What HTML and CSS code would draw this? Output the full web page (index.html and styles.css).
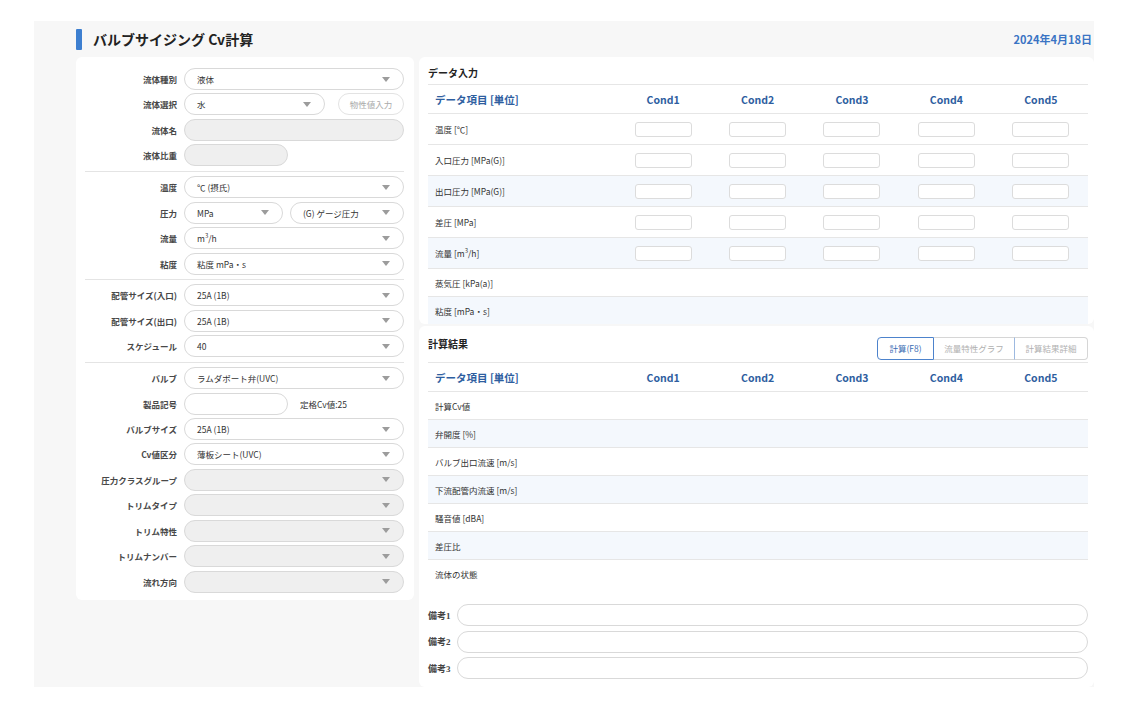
FILE: index.html
```html
<!DOCTYPE html>
<html lang="ja">
<head>
<meta charset="utf-8">
<title>バルブサイジング Cv計算</title>
<link rel="stylesheet" href="styles.css">
</head>
<body>
<div class="page">
  <header class="top">
    <div class="title-wrap"><span class="title-bar"></span><h1 class="title">バルブサイジング Cv計算</h1></div>
    <div class="date">2024年4月18日</div>
  </header>
  <main class="main">
    <section class="card form-card">
      <div class="form">
        <div class="row"><span class="lbl">流体種別</span><div class="ctrl"><div class="sel grow"><span>液体</span><i class="caret"></i></div></div></div>
        <div class="row"><span class="lbl">流体選択</span><div class="ctrl gap13"><div class="sel w141"><span>水</span><i class="caret"></i></div><div class="pill-btn">物性値入力</div></div></div>
        <div class="row"><span class="lbl">流体名</span><div class="ctrl"><div class="sel grow disabled"></div></div></div>
        <div class="row"><span class="lbl">液体比重</span><div class="ctrl"><div class="sel w104 disabled"></div></div></div>
        <div class="sep"></div>
        <div class="row"><span class="lbl">温度</span><div class="ctrl"><div class="sel grow"><span>℃ (摂氏)</span><i class="caret"></i></div></div></div>
        <div class="row"><span class="lbl">圧力</span><div class="ctrl"><div class="sel w99"><span>MPa</span><i class="caret"></i></div><div class="sel grow"><span>(G) ゲージ圧力</span><i class="caret"></i></div></div></div>
        <div class="row"><span class="lbl">流量</span><div class="ctrl"><div class="sel grow"><span>m<sup>3</sup>/h</span><i class="caret"></i></div></div></div>
        <div class="row"><span class="lbl">粘度</span><div class="ctrl"><div class="sel grow"><span>粘度 mPa・s</span><i class="caret"></i></div></div></div>
        <div class="sep"></div>
        <div class="row"><span class="lbl">配管サイズ(入口)</span><div class="ctrl"><div class="sel grow"><span>25A (1B)</span><i class="caret"></i></div></div></div>
        <div class="row"><span class="lbl">配管サイズ(出口)</span><div class="ctrl"><div class="sel grow"><span>25A (1B)</span><i class="caret"></i></div></div></div>
        <div class="row"><span class="lbl">スケジュール</span><div class="ctrl"><div class="sel grow"><span>40</span><i class="caret"></i></div></div></div>
        <div class="sep"></div>
        <div class="row"><span class="lbl">バルブ</span><div class="ctrl"><div class="sel grow"><span>ラムダポート弁(UVC)</span><i class="caret"></i></div></div></div>
        <div class="row"><span class="lbl">製品記号</span><div class="ctrl gap12"><div class="sel w104"></div><span class="note">定格Cv値:25</span></div></div>
        <div class="row"><span class="lbl">バルブサイズ</span><div class="ctrl"><div class="sel grow"><span>25A (1B)</span><i class="caret"></i></div></div></div>
        <div class="row"><span class="lbl">Cv値区分</span><div class="ctrl"><div class="sel grow"><span>薄板シート(UVC)</span><i class="caret"></i></div></div></div>
        <div class="row"><span class="lbl">圧力クラスグループ</span><div class="ctrl"><div class="sel grow disabled"><span></span><i class="caret"></i></div></div></div>
        <div class="row"><span class="lbl">トリムタイプ</span><div class="ctrl"><div class="sel grow disabled"><span></span><i class="caret"></i></div></div></div>
        <div class="row"><span class="lbl">トリム特性</span><div class="ctrl"><div class="sel grow disabled"><span></span><i class="caret"></i></div></div></div>
        <div class="row"><span class="lbl">トリムナンバー</span><div class="ctrl"><div class="sel grow disabled"><span></span><i class="caret"></i></div></div></div>
        <div class="row"><span class="lbl">流れ方向</span><div class="ctrl"><div class="sel grow disabled"><span></span><i class="caret"></i></div></div></div>
      </div>
    </section>

    <div class="right">
      <section class="card data-card">
        <h2 class="sec-title">データ入力</h2>
        <div class="table">
          <div class="trow thead"><span class="tc-item">データ項目 [単位]</span><span>Cond1</span><span>Cond2</span><span>Cond3</span><span>Cond4</span><span>Cond5</span></div>
          <div class="trow tin"><span class="tc-item">温度 [℃]</span><span><i class="cin"></i></span><span><i class="cin"></i></span><span><i class="cin"></i></span><span><i class="cin"></i></span><span><i class="cin"></i></span></div>
          <div class="trow tin"><span class="tc-item">入口圧力 [MPa(G)]</span><span><i class="cin"></i></span><span><i class="cin"></i></span><span><i class="cin"></i></span><span><i class="cin"></i></span><span><i class="cin"></i></span></div>
          <div class="trow tin alt"><span class="tc-item">出口圧力 [MPa(G)]</span><span><i class="cin"></i></span><span><i class="cin"></i></span><span><i class="cin"></i></span><span><i class="cin"></i></span><span><i class="cin"></i></span></div>
          <div class="trow tin"><span class="tc-item">差圧 [MPa]</span><span><i class="cin"></i></span><span><i class="cin"></i></span><span><i class="cin"></i></span><span><i class="cin"></i></span><span><i class="cin"></i></span></div>
          <div class="trow tin alt"><span class="tc-item">流量 [m<sup>3</sup>/h]</span><span><i class="cin"></i></span><span><i class="cin"></i></span><span><i class="cin"></i></span><span><i class="cin"></i></span><span><i class="cin"></i></span></div>
          <div class="trow tplain"><span class="tc-item">蒸気圧 [kPa(a)]</span></div>
          <div class="trow tplain alt last"><span class="tc-item">粘度 [mPa・s]</span></div>
        </div>
      </section>

      <section class="card result-card">
        <div class="res-head">
          <h2 class="sec-title">計算結果</h2>
          <div class="btn-group">
            <span class="gbtn active">計算(F8)</span>
            <span class="gbtn">流量特性グラフ</span>
            <span class="gbtn">計算結果詳細</span>
          </div>
        </div>
        <div class="table">
          <div class="trow thead"><span class="tc-item">データ項目 [単位]</span><span>Cond1</span><span>Cond2</span><span>Cond3</span><span>Cond4</span><span>Cond5</span></div>
          <div class="trow tres"><span class="tc-item">計算Cv値</span></div>
          <div class="trow tres alt"><span class="tc-item">弁開度 [%]</span></div>
          <div class="trow tres"><span class="tc-item">バルブ出口流速 [m/s]</span></div>
          <div class="trow tres alt"><span class="tc-item">下流配管内流速 [m/s]</span></div>
          <div class="trow tres"><span class="tc-item">騒音値 [dBA]</span></div>
          <div class="trow tres alt"><span class="tc-item">差圧比</span></div>
          <div class="trow tres last"><span class="tc-item">流体の状態</span></div>
        </div>
        <div class="remarks">
          <div class="rrow"><span class="rlbl">備考1</span><div class="rin"></div></div>
          <div class="rrow"><span class="rlbl">備考2</span><div class="rin"></div></div>
          <div class="rrow"><span class="rlbl">備考3</span><div class="rin"></div></div>
        </div>
      </section>
    </div>
  </main>
</div>
</body>
</html>
```

FILE: styles.css
```css
* { box-sizing: border-box; }
html, body { margin: 0; padding: 0; background: #fff; }
body {
  font-family: "Noto Sans CJK JP", "Noto Sans", sans-serif;
  color: #333;
  padding: 21px 37px 0 34px;
}
.page {
  width: 1060px;
  height: 666px;
  background: #f7f7f7;
  display: flex;
  flex-direction: column;
}
.top {
  height: 36px;
  display: flex;
  align-items: center;
  justify-content: space-between;
  padding: 0 2px 0 42px;
}
.title-wrap { display: flex; align-items: center; }
.title-bar {
  width: 6px;
  height: 21px;
  background: #3d7fd0;
  border-radius: 1px;
  margin-right: 11px;
}
.title {
  margin: 0;
  font-size: 14px;
  font-weight: 700;
  color: #222;
  line-height: 20px;
}
.date {
  font-size: 11px;
  font-weight: 700;
  color: #3a74c4;
}
.main {
  flex: 1;
  display: flex;
  gap: 5px;
  padding-left: 42px;
  min-height: 0;
}
.card {
  background: #fff;
  border-radius: 6px;
}
.form-card {
  width: 338px;
  align-self: flex-start;
  padding: 11px 10px 7px 9px;
}
.form { display: flex; flex-direction: column; gap: 3.45px; }
.row {
  display: grid;
  grid-template-columns: 92px 1fr;
  column-gap: 7px;
  align-items: center;
  height: 22px;
}
.lbl {
  text-align: right;
  font-size: 8.5px;
  font-weight: 700;
  color: #484848;
  white-space: nowrap;
}
.ctrl { display: flex; align-items: center; gap: 7px; }
.ctrl.gap13 { gap: 13px; }
.ctrl.gap12 { gap: 12px; }
.sel {
  height: 22px;
  border: 1px solid #d9d9d9;
  border-radius: 11px;
  background: #fff;
  display: flex;
  align-items: center;
  justify-content: space-between;
  padding: 0 13px 0 12px;
  font-size: 8.5px;
  color: #333;
  white-space: nowrap;
}
.sel sup { font-size: 6px; line-height: 0; }
.sel.grow { flex: 1; }
.sel.w141 { width: 141px; }
.sel.w104 { width: 104px; }
.sel.w99 { width: 99px; }
.sel.disabled { background: #efefef; }
.caret {
  width: 0;
  height: 0;
  border-left: 4px solid transparent;
  border-right: 4px solid transparent;
  border-top: 5px solid #9c9c9c;
}
.pill-btn {
  width: 66px;
  height: 22px;
  border: 1px solid #e3e3e3;
  border-radius: 11px;
  display: flex;
  align-items: center;
  justify-content: center;
  font-size: 8.5px;
  color: #aaa;
}
.note { font-size: 8.5px; color: #333; }
.sep {
  height: 1px;
  background: #e4e4e4;
  margin: 1px 0;
}

.right {
  flex: 1;
  display: flex;
  flex-direction: column;
  gap: 2px;
}
.data-card { padding: 9px 6px 0 9px; }
.sec-title {
  margin: 0;
  font-size: 10px;
  font-weight: 700;
  color: #222;
  line-height: 14px;
}
.data-card .sec-title { margin-bottom: 4px; }
.table { border-top: 1px solid #e6e6e6; }
.trow {
  display: grid;
  grid-template-columns: 188px repeat(5, 1fr);
  align-items: center;
  border-bottom: 1px solid #e6e6e6;
  font-size: 8.5px;
  color: #333;
}
.trow > span { text-align: center; display: flex; justify-content: center; align-items: center; }
.trow > .tc-item { justify-content: flex-start; padding-left: 7px; text-align: left; }
.trow sup { font-size: 6px; line-height: 0; margin-top: -4px; }
.thead { height: 29px; font-size: 10.5px; font-weight: 700; color: #2e5e9f; }
.tin { height: 31px; }
.tplain { height: 28px; }
.tres { height: 28px; }
.trow.alt { background: #f4f8fd; }
.trow.last { border-bottom: none; }
.data-card .trow.last { height: 27px; }
.cin {
  display: block;
  width: 57px;
  height: 15px;
  border: 1px solid #dcdcdc;
  border-radius: 3px;
  background: #fff;
}

.result-card {
  flex: 1;
  padding: 9px 6px 8px 9px;
  display: flex;
  flex-direction: column;
}
.res-head {
  height: 24px;
  display: flex;
  align-items: center;
  justify-content: space-between;
  margin-bottom: 3px;
}
.result-card .sec-title { align-self: flex-start; margin-top: 2px; }
.btn-group {
  display: flex;
  height: 23px;
  margin-top: 2px;
}
.gbtn {
  display: flex;
  align-items: center;
  justify-content: center;
  border: 1px solid #d6d6d6;
  border-left: none;
  font-size: 8.5px;
  color: #b0b0b0;
  background: #fff;
}
.gbtn:nth-child(2) { width: 81px; border-right-color: #9db9e0; }
.gbtn:nth-child(3) { width: 73px; border-radius: 0 4px 4px 0; }
.gbtn.active {
  width: 57px;
  border: 1px solid #4d83cc;
  border-radius: 4px 0 0 4px;
  color: #3b6db3;
}
.remarks {
  margin-top: auto;
  display: flex;
  flex-direction: column;
  gap: 4.5px;
}
.rrow {
  display: flex;
  align-items: center;
  height: 22px;
}
.rlbl {
  width: 29px;
  font-family: "Liberation Serif", "Noto Sans CJK JP", serif;
  font-size: 9px;
  font-weight: 700;
  color: #444;
  white-space: nowrap;
}
.rin {
  flex: 1;
  height: 22px;
  border: 1px solid #d9d9d9;
  border-radius: 11px;
  background: #fff;
}
```
